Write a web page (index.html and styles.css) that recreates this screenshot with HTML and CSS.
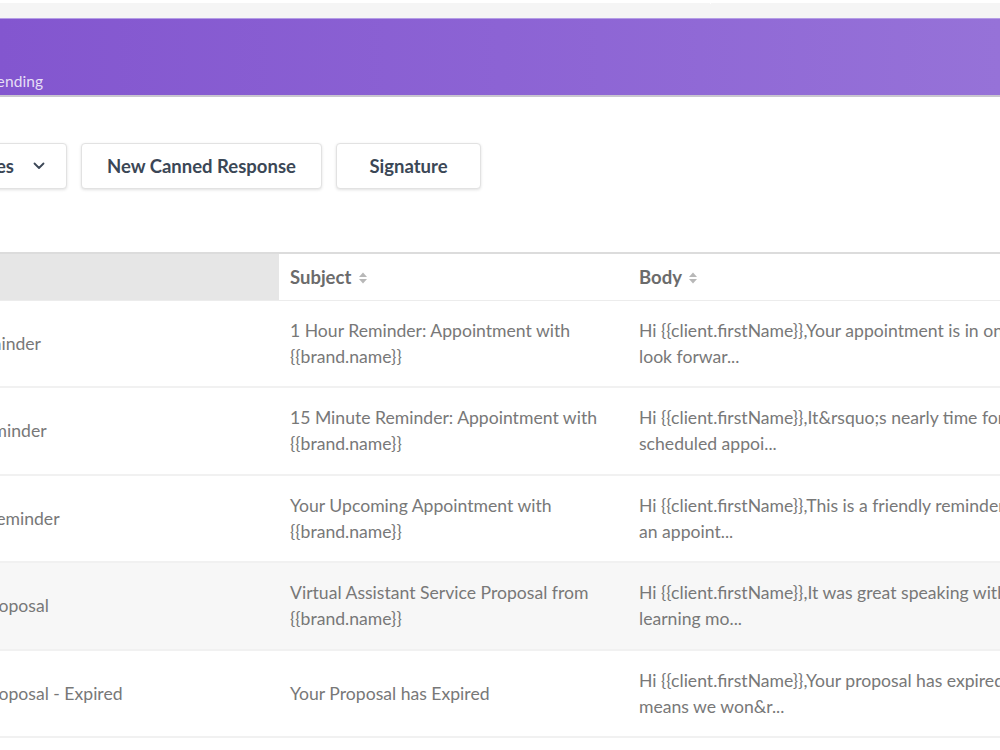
FILE: index.html
```html
<!DOCTYPE html>
<html>
<head>
<meta charset="utf-8">
<link rel="stylesheet" href="styles.css">
</head>
<body>
<div class="topbar"><div class="topbar-cell"></div><div class="topbar-cell"></div></div>
<header class="hero">
  <div class="hero-inner"><span class="crumb">Email Sending</span></div>
</header>
<main class="content">
  <div class="toolbar">
    <button class="btn btn-drop"><span>All Templates</span>
      <svg class="chev" width="14" height="14" viewBox="0 0 14 14"><path d="M2.5 4.5l4.5 4.5 4.5-4.5" fill="none" stroke="#3b4756" stroke-width="1.8" stroke-linecap="round" stroke-linejoin="round"/></svg>
    </button>
    <button class="btn btn-new">New Canned Response</button>
    <button class="btn btn-sig">Signature</button>
  </div>
  <table class="grid">
    <colgroup><col class="c-name"><col class="c-subj"><col class="c-body"></colgroup>
    <thead>
      <tr>
        <th class="sorted">Name</th>
        <th>Subject <svg class="sort" width="10" height="14" viewBox="0 0 10 14"><path d="M5 1.5L9 6H1z M5 12.5L1 8h8z" fill="#b8b8b8"/></svg></th>
        <th>Body <svg class="sort" width="10" height="14" viewBox="0 0 10 14"><path d="M5 1.5L9 6H1z M5 12.5L1 8h8z" fill="#b8b8b8"/></svg></th>
      </tr>
    </thead>
    <tbody>
      <tr>
        <td>1 Hour Reminder</td>
        <td>1 Hour Reminder: Appointment with {{brand.name}}</td>
        <td class="body">Hi {{client.firstName}},Your appointment is in one hour. We<br>look forwar...</td>
      </tr>
      <tr>
        <td>15 Min. Reminder</td>
        <td>15 Minute Reminder: Appointment with {{brand.name}}</td>
        <td class="body">Hi {{client.firstName}},It&amp;rsquo;s nearly time for your<br>scheduled appoi...</td>
      </tr>
      <tr>
        <td>Next Day Reminder</td>
        <td>Your Upcoming Appointment with {{brand.name}}</td>
        <td class="body">Hi {{client.firstName}},This is a friendly reminder that you have<br>an appoint...</td>
      </tr>
      <tr class="hover">
        <td>Standard Proposal</td>
        <td>Virtual Assistant Service Proposal from {{brand.name}}</td>
        <td class="body">Hi {{client.firstName}},It was great speaking with you and<br>learning mo...</td>
      </tr>
      <tr>
        <td>Standard Proposal - Expired</td>
        <td>Your Proposal has Expired</td>
        <td class="body">Hi {{client.firstName}},Your proposal has expired, which<br>means we won&amp;r...</td>
      </tr>
    </tbody>
  </table>
</main>
</body>
</html>
```
FILE: styles.css
```css
* { box-sizing: border-box; }
html, body { margin: 0; padding: 0; }
body {
  background: #fff;
  font-family: "Lato", "Open Sans", sans-serif;
  overflow: hidden;
  width: 1000px;
  height: 750px;
}
.topbar {
  margin-top: 3px;
  height: 15px;
  background: #f5f5f5;
  display: flex;
}
.topbar-cell { flex: 0 0 711px; border-right: 1px solid #fff; height: 1px; }
.topbar-cell + .topbar-cell { flex: 1; border: 0; }
.hero {
  height: 79px;
  background: linear-gradient(90deg, #8356cf 0%, #8c63d4 50%, #9672d8 100%);
  border-top: 1px solid #b59de6;
  border-bottom: 2px solid #c9c6cf;
  display: flex;
  align-items: flex-end;
}
.hero-inner { margin-left: -53px; padding-bottom: 5px; }
.crumb {
  color: rgba(255,255,255,0.82);
  font-size: 15.5px;
  letter-spacing: 0.1px;
}
.content { margin-left: -102px; width: 1312px; }
.toolbar {
  display: flex;
  gap: 14px;
  padding-top: 46px;
  padding-left: 12px;
  height: 155px;
}
.btn {
  height: 46px;
  background: #fff;
  border: 1px solid #e2e2e2;
  border-radius: 4px;
  box-shadow: 0 1px 3px rgba(0,0,0,0.12);
  font-family: inherit;
  font-size: 18.5px;
  font-weight: 700;
  color: #3b4756;
  padding: 0 20px;
  display: flex;
  align-items: center;
  white-space: nowrap;
  cursor: pointer;
}
.btn-drop { width: 157px; gap: 18px; justify-content: flex-end; padding-right: 20px; overflow: hidden; }
.btn-new { width: 241px; justify-content: center; }
.btn-sig { width: 145px; justify-content: center; }
.chev { display: block; flex: none; }
.grid {
  border-collapse: collapse;
  table-layout: fixed;
  width: 1312px;
  border-top: 2px solid #dcdcdc;
}
.c-name { width: 381px; }
.c-subj { width: 349px; }
.c-body { width: 582px; }
.grid th {
  height: 47px;
  text-align: left;
  font-size: 18.5px;
  font-weight: 700;
  color: #6b6b6b;
  padding: 0 11px;
  border-bottom: 1px solid #ececec;
  vertical-align: middle;
  white-space: nowrap;
}
.grid th.sorted { background: #e6e6e6; }
.sort { vertical-align: -1px; margin-left: 2px; }
.grid td {
  font-size: 17.6px;
  line-height: 26px;
  color: #787878;
  padding: 17px 11px 16.5px;
  border-bottom: 2px solid #f1f1f1;
  vertical-align: middle;
}
.grid td.body { white-space: nowrap; overflow: hidden; }
.grid tr.hover td { background: #f7f7f7; }
```
